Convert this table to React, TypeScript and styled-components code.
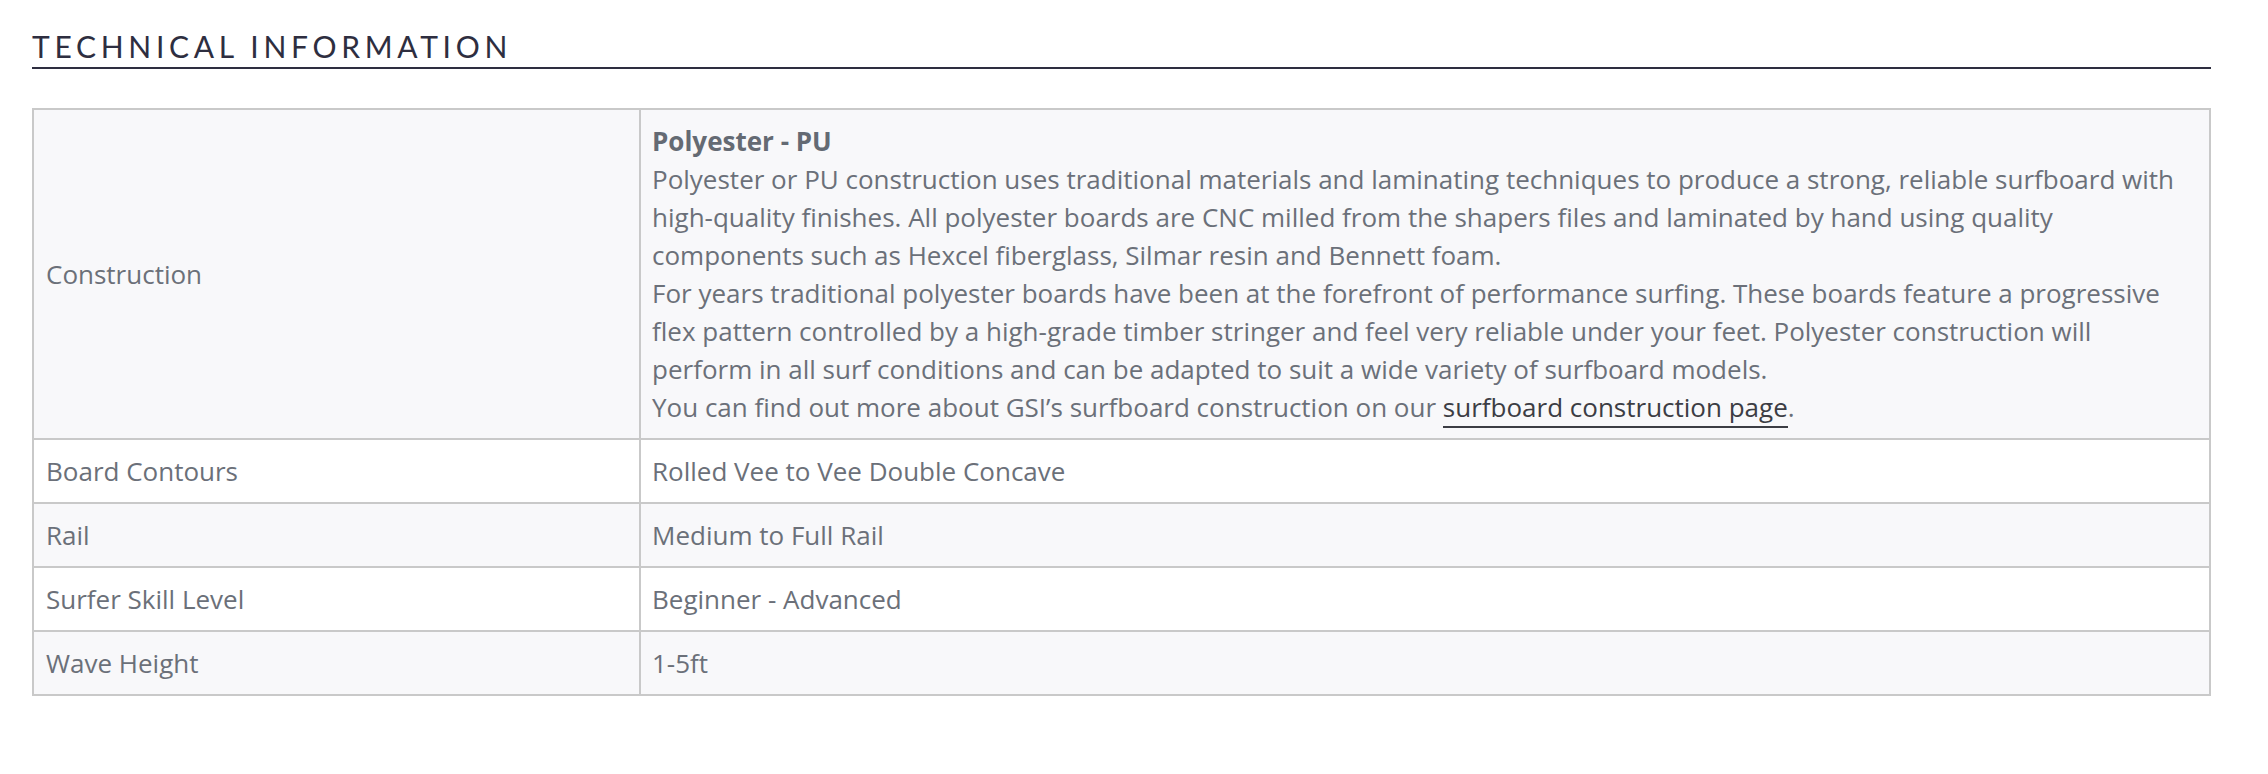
import React from "react";
import styled, { createGlobalStyle } from "styled-components";

const GlobalStyle = createGlobalStyle`
  html, body {
    margin: 0;
    padding: 0;
    background: #ffffff;
  }
  body {
    font-family: "Open Sans", "Liberation Sans", sans-serif;
  }
`;

interface SpecRow {
  label: string;
  value: React.ReactNode;
}

const Page = styled.div`
  padding: 29px 57px 60px 32px;
`;

const Heading = styled.h2`
  margin: 0 0 39px;
  padding-bottom: 4px;
  border-bottom: 2px solid #2e2e40;
  font-family: Lato, "Open Sans", sans-serif;
  font-weight: 400;
  font-size: 30px;
  line-height: 34px;
  letter-spacing: 4.7px;
  color: #2e2e40;
  text-transform: uppercase;
`;

const Table = styled.table`
  width: 100%;
  table-layout: fixed;
  border-collapse: collapse;
  border: 2px solid #c9c9c9;
  font-size: 26px;
  line-height: 38px;
  color: #6b7079;
`;

const Row = styled.tr<{ $striped: boolean }>`
  background: ${(p) => (p.$striped ? "#f8f8fa" : "#ffffff")};
`;

const LabelCell = styled.td`
  width: 581px;
  padding: 12px;
  border: 2px solid #c9c9c9;
  vertical-align: middle;
`;

const ValueCell = styled.td`
  padding: 12px 16px 12px 11px;
  border: 2px solid #c9c9c9;
  vertical-align: middle;
`;

const Title = styled.strong`
  display: block;
  font-weight: 700;
  color: #646a73;
`;

const Para = styled.p`
  margin: 0;
`;

const Link = styled.a`
  color: #3c3d44;
  text-decoration: none;
  border-bottom: 2px solid #3c3d44;
  padding-bottom: 1px;
`;

const construction = (
  <>
    <Title>Polyester - PU</Title>
    <Para>
      Polyester or PU construction uses traditional materials and laminating
      techniques to produce a strong, reliable surfboard with high-quality
      finishes. All polyester boards are CNC milled from the shapers files and
      laminated by hand using quality components such as Hexcel fiberglass,
      Silmar resin and Bennett foam.
    </Para>
    <Para>
      For years traditional polyester boards have been at the forefront of
      performance surfing. These boards feature a progressive flex pattern
      controlled by a high-grade timber stringer and feel very reliable under
      your feet. Polyester construction will perform in all surf conditions and
      can be adapted to suit a wide variety of surfboard models.
    </Para>
    <Para>
      You can find out more about GSI’s surfboard construction on our{" "}
      <Link href="#">surfboard construction page</Link>.
    </Para>
  </>
);

const rows: SpecRow[] = [
  { label: "Construction", value: construction },
  { label: "Board Contours", value: "Rolled Vee to Vee Double Concave" },
  { label: "Rail", value: "Medium to Full Rail" },
  { label: "Surfer Skill Level", value: "Beginner - Advanced" },
  { label: "Wave Height", value: "1-5ft" },
];

export default function App() {
  return (
    <>
      <GlobalStyle />
      <Page>
        <Heading>Technical Information</Heading>
        <Table>
          <tbody>
            {rows.map((row, i) => (
              <Row key={row.label} $striped={i % 2 === 0}>
                <LabelCell>{row.label}</LabelCell>
                <ValueCell>{row.value}</ValueCell>
              </Row>
            ))}
          </tbody>
        </Table>
      </Page>
    </>
  );
}
